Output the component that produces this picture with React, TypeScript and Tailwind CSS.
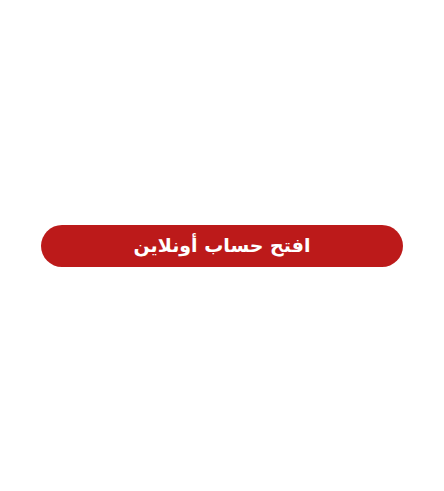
export default function App() {
    return (
        <div className="flex h-[491px] w-full items-center justify-center bg-white">
            <button
                dir="rtl"
                className="flex h-[42px] w-[362px] items-center justify-center rounded-full bg-[#bc1a1a] text-[19px] font-bold text-white"
                style={{ fontFamily: '"DejaVu Sans", sans-serif' }}
            >
                افتح حساب أونلاين
            </button>
        </div>
    );
}
